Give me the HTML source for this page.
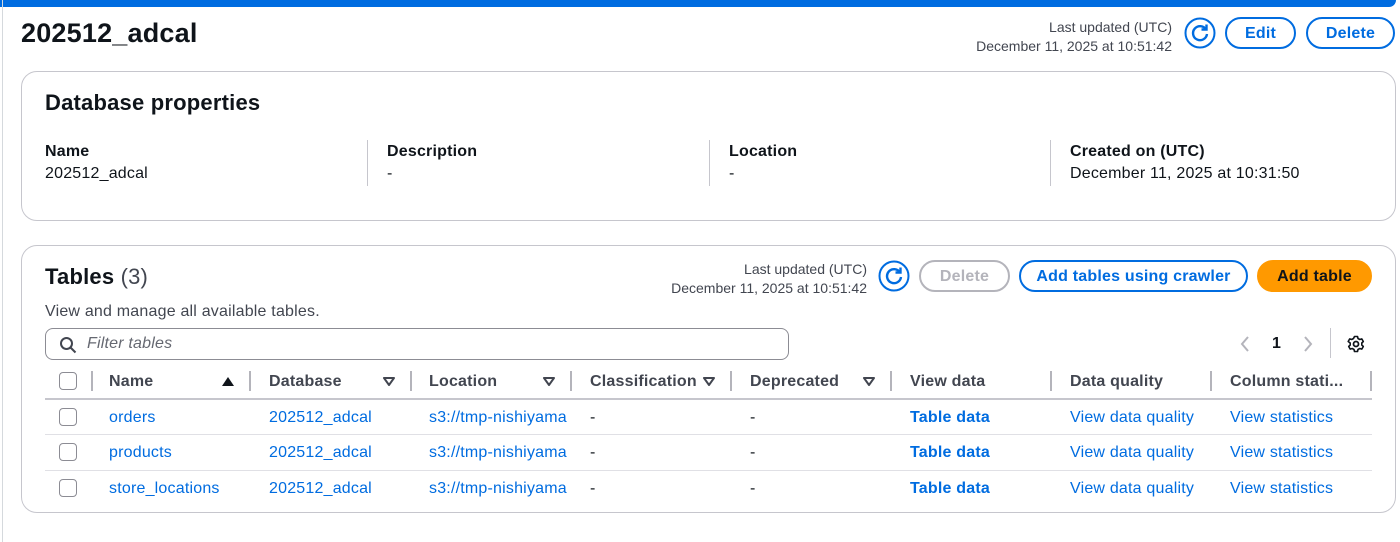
<!DOCTYPE html>
<html><head><style>
*{box-sizing:border-box;margin:0;padding:0}
body{width:1400px;height:542px;background:#fff;font-family:"Liberation Sans",sans-serif;color:#0f141a;position:relative;overflow:hidden;font-size:16px;letter-spacing:.2px}
.a{position:absolute;white-space:nowrap}
.topbar{left:0;top:0;width:1396px;height:7px;background:#006ce0;border-radius:0 0 12px 0}
.lline{left:2px;top:0;width:1px;height:542px;background:#d5d9dd}
.card{position:absolute;left:21px;width:1375px;border:1px solid #c6c6cd;border-radius:16px;background:#fff}
.btn{position:absolute;height:32px;border:2px solid #006ce0;border-radius:16px;color:#006ce0;font-weight:bold;font-size:16px;text-align:center;line-height:30px}
.lbl{font-weight:bold}
.link{color:#006ce0}
.sep{position:absolute;width:2px;height:20px;background:#b4b4bb}
.cb{position:absolute;width:18px;height:18px;border:1.5px solid #8c8c94;border-radius:4px}
.hr{position:absolute;left:45px;width:1327px;height:1px;background:#e0e0e5}
.th{font-weight:bold;color:#424650}
.tri{position:absolute}
.sm{font-size:14px;color:#424650;text-align:right;line-height:19px;letter-spacing:0}
</style></head><body>
<div class="a topbar"></div>
<div class="a lline"></div>
<div class="a" style="left:21px;top:18px;font-size:27px;font-weight:bold">202512_adcal</div>
<div class="a sm" style="right:228px;top:18px">Last updated (UTC)<br>December 11, 2025 at 10:51:42</div>
<svg class="a" style="left:1184px;top:17px" width="32" height="32" viewBox="0 0 32 32"><circle cx="16" cy="16" r="14.5" fill="none" stroke="#006ce0" stroke-width="2"/><path d="M22 12.5A7 7 0 1 0 23 17" fill="none" stroke="#006ce0" stroke-width="2.4"/><path d="M17.5 12.5h5v-5" fill="none" stroke="#006ce0" stroke-width="2.4"/></svg>
<div class="btn" style="left:1225px;top:17px;width:71px">Edit</div>
<div class="btn" style="left:1306px;top:17px;width:89px">Delete</div>

<div class="card" style="top:71px;height:150px"></div>
<div class="a" style="left:45px;top:90px;font-size:22px;font-weight:bold">Database properties</div>
<div class="a lbl" style="left:45px;top:143px">Name</div><div class="a" style="left:45px;top:165px">202512_adcal</div>
<div class="a" style="left:367px;top:140px;width:1px;height:46px;background:#c6c6cd"></div>
<div class="a lbl" style="left:387px;top:143px">Description</div><div class="a" style="left:387px;top:165px">-</div>
<div class="a" style="left:709px;top:140px;width:1px;height:46px;background:#c6c6cd"></div>
<div class="a lbl" style="left:729px;top:143px">Location</div><div class="a" style="left:729px;top:165px">-</div>
<div class="a" style="left:1050px;top:140px;width:1px;height:46px;background:#c6c6cd"></div>
<div class="a lbl" style="left:1070px;top:143px">Created on (UTC)</div><div class="a" style="left:1070px;top:165px">December 11, 2025 at 10:31:50</div>

<div class="card" style="top:245px;height:268px"></div>
<div class="a" style="left:45px;top:264px;font-size:22px"><b>Tables</b> <span style="color:#424650">(3)</span></div>
<div class="a" style="left:45px;top:303px;color:#424650">View and manage all available tables.</div>
<div class="a sm" style="right:533px;top:260px">Last updated (UTC)<br>December 11, 2025 at 10:51:42</div>
<svg class="a" style="left:878px;top:260px" width="32" height="32" viewBox="0 0 32 32"><circle cx="16" cy="16" r="14.5" fill="none" stroke="#006ce0" stroke-width="2"/><path d="M22 12.5A7 7 0 1 0 23 17" fill="none" stroke="#006ce0" stroke-width="2.4"/><path d="M17.5 12.5h5v-5" fill="none" stroke="#006ce0" stroke-width="2.4"/></svg>
<div class="btn" style="left:919px;top:260px;width:91px;border-color:#b4b4bb;color:#b4b4bb">Delete</div>
<div class="btn" style="left:1019px;top:260px;width:229px">Add tables using crawler</div>
<div class="btn" style="left:1257px;top:260px;width:115px;background:#ff9900;border-color:#ff9900;color:#0f141a">Add table</div>

<div class="a" style="left:45px;top:328px;width:744px;height:32px;border:1px solid #8c8c94;border-radius:8px"></div>
<svg class="a" style="left:59px;top:336px" width="18" height="18" viewBox="0 0 18 18"><circle cx="7.5" cy="7.5" r="5.5" fill="none" stroke="#424650" stroke-width="2"/><path d="M11.5 11.5l5 5" stroke="#424650" stroke-width="2"/></svg>
<div class="a" style="left:87px;top:335px;font-style:italic;color:#656871">Filter tables</div>
<svg class="a" style="left:1239px;top:335px" width="12" height="18" viewBox="0 0 12 18"><path d="M9 2L3 9l6 7" fill="none" stroke="#b4b4bb" stroke-width="2"/></svg>
<div class="a" style="left:1272px;top:335px;font-weight:bold">1</div>
<svg class="a" style="left:1302px;top:335px" width="12" height="18" viewBox="0 0 12 18"><path d="M3 2l6 7-6 7" fill="none" stroke="#b4b4bb" stroke-width="2"/></svg>
<div class="a" style="left:1330px;top:328px;width:1px;height:30px;background:#c6c6cd"></div>
<svg class="a" style="left:1347px;top:335px" width="18" height="18" viewBox="0 0 18 18"><circle cx="9" cy="9" r="2.5" fill="none" stroke="#0f141a" stroke-width="1.8"/><path d="M7.5 1.5h3l.5 2 1.8 1 2-.6 1.5 2.6-1.5 1.5v2l1.5 1.5-1.5 2.6-2-.6-1.8 1-.5 2h-3l-.5-2-1.8-1-2 .6-1.5-2.6 1.5-1.5v-2L1.2 6.5l1.5-2.6 2 .6 1.8-1z" fill="none" stroke="#0f141a" stroke-width="1.6" stroke-linejoin="round"/></svg>

<div class="cb" style="left:59px;top:372px"></div>
<div class="sep" style="left:91px;top:371px"></div>
<div class="a th" style="left:109px;top:373px">Name</div>
<svg class="tri" style="left:221px;top:376px" width="14" height="11"><path d="M1 10L7 1l6 9z" fill="#0f141a"/></svg>
<div class="sep" style="left:249px;top:371px"></div>
<div class="a th" style="left:269px;top:373px">Database</div>
<svg class="tri" style="left:382px;top:376px" width="14" height="11"><path d="M2 2h10L7 9z" fill="none" stroke="#424650" stroke-width="2" stroke-linejoin="round"/></svg>
<div class="sep" style="left:410px;top:371px"></div>
<div class="a th" style="left:429px;top:373px">Location</div>
<svg class="tri" style="left:542px;top:376px" width="14" height="11"><path d="M2 2h10L7 9z" fill="none" stroke="#424650" stroke-width="2" stroke-linejoin="round"/></svg>
<div class="sep" style="left:570px;top:371px"></div>
<div class="a th" style="left:590px;top:373px">Classification</div>
<svg class="tri" style="left:702px;top:376px" width="14" height="11"><path d="M2 2h10L7 9z" fill="none" stroke="#424650" stroke-width="2" stroke-linejoin="round"/></svg>
<div class="sep" style="left:730px;top:371px"></div>
<div class="a th" style="left:750px;top:373px">Deprecated</div>
<svg class="tri" style="left:862px;top:376px" width="14" height="11"><path d="M2 2h10L7 9z" fill="none" stroke="#424650" stroke-width="2" stroke-linejoin="round"/></svg>
<div class="sep" style="left:890px;top:371px"></div>
<div class="a th" style="left:910px;top:373px">View data</div>
<div class="sep" style="left:1050px;top:371px"></div>
<div class="a th" style="left:1070px;top:373px">Data quality</div>
<div class="sep" style="left:1210px;top:371px"></div>
<div class="a th" style="left:1230px;top:373px">Column stati...</div>
<div class="sep" style="left:1370px;top:371px"></div>
<div class="hr" style="top:398px;height:2px;background:#c6c6cd"></div>

<div class="cb" style="left:59px;top:408px"></div>
<div class="a link" style="left:109px;top:409px">orders</div><div class="a link" style="left:269px;top:409px">202512_adcal</div><div class="a link" style="left:429px;top:409px;width:142px;overflow:hidden">s3://tmp-nishiyama</div><div class="a" style="left:590px;top:409px">-</div><div class="a" style="left:750px;top:409px">-</div><div class="a link" style="left:910px;top:409px;font-weight:bold">Table data</div><div class="a link" style="left:1070px;top:409px">View data quality</div><div class="a link" style="left:1230px;top:409px">View statistics</div>
<div class="hr" style="top:434px"></div>
<div class="cb" style="left:59px;top:443px"></div>
<div class="a link" style="left:109px;top:444px">products</div><div class="a link" style="left:269px;top:444px">202512_adcal</div><div class="a link" style="left:429px;top:444px;width:142px;overflow:hidden">s3://tmp-nishiyama</div><div class="a" style="left:590px;top:444px">-</div><div class="a" style="left:750px;top:444px">-</div><div class="a link" style="left:910px;top:444px;font-weight:bold">Table data</div><div class="a link" style="left:1070px;top:444px">View data quality</div><div class="a link" style="left:1230px;top:444px">View statistics</div>
<div class="hr" style="top:470px"></div>
<div class="cb" style="left:59px;top:479px"></div>
<div class="a link" style="left:109px;top:480px">store_locations</div><div class="a link" style="left:269px;top:480px">202512_adcal</div><div class="a link" style="left:429px;top:480px;width:142px;overflow:hidden">s3://tmp-nishiyama</div><div class="a" style="left:590px;top:480px">-</div><div class="a" style="left:750px;top:480px">-</div><div class="a link" style="left:910px;top:480px;font-weight:bold">Table data</div><div class="a link" style="left:1070px;top:480px">View data quality</div><div class="a link" style="left:1230px;top:480px">View statistics</div>
</body></html>
